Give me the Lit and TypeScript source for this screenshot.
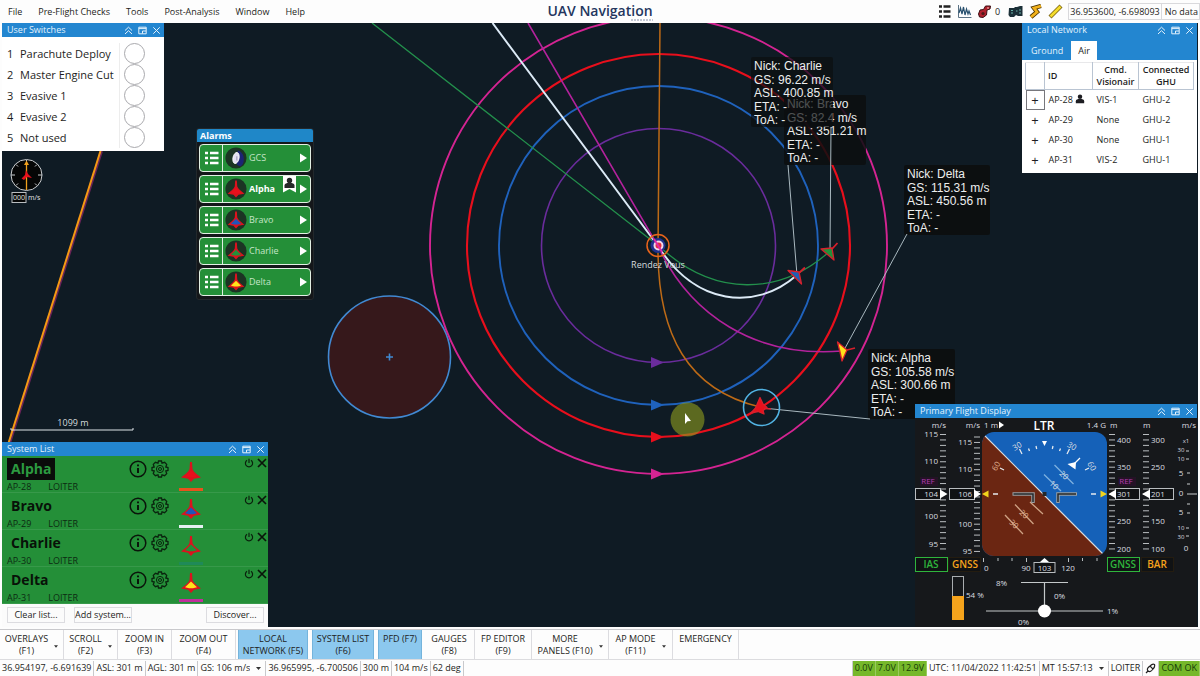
import { LitElement, html, svg, css } from "lit";
import { customElement, property, state } from "lit/decorators.js";
import { classMap } from "lit/directives/class-map.js";

type Craft = { name: string; id: string; fill: string; track: string };

const CRAFT: Craft[] = [
  { name: "Alpha", id: "AP-28", fill: "#e8101c", track: "#e8521c" },
  { name: "Bravo", id: "AP-29", fill: "#1f55b8", track: "#e6f0f4" },
  { name: "Charlie", id: "AP-30", fill: "#23913a", track: "#1f8a58" },
  { name: "Delta", id: "AP-31", fill: "#ffe31a", track: "#c0309c" },
];

const SWITCHES = ["Parachute Deploy", "Master Engine Cut", "Evasive 1", "Evasive 2", "Not used"];

const LINKS = [
  ["AP-28", "VIS-1", "GHU-2"],
  ["AP-29", "None", "GHU-2"],
  ["AP-30", "None", "GHU-1"],
  ["AP-31", "VIS-2", "GHU-1"],
];

const delta = (fill: string) => svg`
  <path d="M-1 -10 H1 L1.5 -3 C2.500 0 6 2.500 10 5.500 L3 6.800 L0 10 L-3 6.800 L-10 5.500 C-6 2.500 -2.500 0 -1.500 -3 Z" fill="#dc121e"/>
  <path d="M0 -1.500 L6 4.300 L2 5.300 H-2 L-6 4.300 Z" fill=${fill}/>`;

const person = svg`
  <circle cx="6" cy="3.4" r="2.7"/>
  <path d="M1 11 V8.6 C1 6.6 3 6 6 6 S11 6.6 11 8.6 V11 Z"/>`;

@customElement("tool-window")
class ToolWindow extends LitElement {
  @property() heading = "";

  static styles = css`
    :host { display: flex; flex-direction: column; background: #fff; }
    .bar {
      display: flex; align-items: center; gap: 5px; flex: none;
      height: 14px; padding: 0 3px 0 5px; background: #2386d0; color: #e4f2fc;
    }
    h2 { flex: 1; margin: 0; font: 9px/14px "Open Sans", "Noto Sans", sans-serif; white-space: nowrap; }
    button { all: unset; display: flex; cursor: pointer; }
    svg { width: 9px; height: 9px; fill: none; stroke: #e4f2fc; stroke-width: 1; }
  `;

  render() {
    return html`
      <div class="bar">
        <h2>${this.heading}</h2>
        <button aria-label="Collapse"><svg viewBox="0 0 9 9"><path d="M1 4.5 L4.5 1.2 L8 4.5 M1 8 L4.5 4.7 L8 8"/></svg></button>
        <button aria-label="Dock"><svg viewBox="0 0 9 9"><path d="M.8 1.2 H8.2 V7.8 H.8 Z M.8 2.6 H8.2 M8 5 H4.5 V7.5"/></svg></button>
        <button aria-label="Close"><svg viewBox="0 0 9 9"><path d="M1.3 1.3 L7.7 7.7 M7.7 1.3 L1.3 7.7"/></svg></button>
      </div>
      <slot></slot>
    `;
  }
}

@customElement("flight-map")
class FlightMap extends LitElement {
  static styles = css`
    :host { display: block; }
    svg { display: block; width: 100%; height: 100%; }
    .tag { font: 12px "Liberation Sans", Arial, sans-serif; fill: #eceeee; }
    .small { font: 9px "Open Sans", "Noto Sans", sans-serif; fill: #d4dadd; }
    .tiny { font: 7px "Open Sans", "Noto Sans", sans-serif; fill: #e4e4e4; }
  `;

  private tag(x: number, y: number, w: number, lines: string[], shade = 0.92) {
    return svg`
      <rect x=${x} y=${y} width=${w} height="70" rx="2" fill="#0c0e0f" fill-opacity=${shade}/>
      ${lines.map((t, i) => svg`<text class="tag" x=${x + 3} y=${y + 13 + i * 13.5}>${t}</text>`)}`;
  }

  private ring(r: number, color: string, w: number) {
    return svg`
      <circle cx="658.5" cy="245.5" r=${r} fill="none" stroke=${color} stroke-width=${w}/>
      <path d="M651 ${245.5 + r - 5.5} L664 ${245.5 + r} L651 ${245.5 + r + 5.5} Z" fill=${color}/>`;
  }

  render() {
    return html`
      <svg viewBox="2 23 1196 604" preserveAspectRatio="xMidYMid slice" role="img" aria-label="Mission map">
        <rect x="2" y="23" width="1196" height="604" fill="#0f1b24"/>
        <path d="M101.5 151 L9.5 443" stroke="#6a2458" stroke-width="3"/>
        <path d="M100.5 151 L8.5 443" stroke="#f59a12" stroke-width="2"/>
        <path d="M11 428 V430 H133 V428" fill="none" stroke="#dfe5e8" stroke-width="1"/>
        <text class="small" x="73" y="426" text-anchor="middle">1099 m</text>

        <circle cx="389.5" cy="357" r="61" fill="#36181b" stroke="#4189d2" stroke-width="1.6"/>
        <path d="M386 357 H393 M389.5 353.5 V360.5" stroke="#4189d2" stroke-width="1.6"/>

        ${this.ring(117, "#6a2c9c", 1.6)}
        ${this.ring(159.5, "#1f62bc", 1.9)}
        ${this.ring(191.5, "#e80f1c", 2.1)}
        ${this.ring(228.5, "#d42492", 1.9)}

        <g fill="none">
          <path d="M372 23 L660 247 C715 298 780 295 829 252" stroke="#23904c" stroke-width="1.3"/>
          <path d="M660 23 L658 250 C658 335 688 390 760 407" stroke="#bd6a16" stroke-width="1.5"/>
          <path d="M492.500 23 L658 246 C695 305 755 312 797 275" stroke="#dceaf6" stroke-width="2"/>
          <path d="M528 23 L658 246 C690 315 755 358 842 351" stroke="#b3229c" stroke-width="1.6"/>
        </g>

        <circle cx="658" cy="245.500" r="7.500" fill="#20308c"/>
        <circle cx="658" cy="245.500" r="11" fill="none" stroke="#e8641c" stroke-width="1.500"/>
        <circle cx="658.500" cy="245.500" r="4" fill="#e82c3c" stroke="#f2d8ea" stroke-width="2"/>
        <path d="M654 239 L662 252" stroke="#dd2ba6" stroke-width="2"/>
        <text class="small" x="658" y="268" text-anchor="middle">Rendez Vous</text>

        <circle cx="687.500" cy="419.500" r="17" fill="#8c9a1e" fill-opacity=".62"/>
        <path d="M685 413 L691 421 L687.500 421.300 L685 424 Z" fill="#fff"/>

        ${this.tag(784, 95, 82, ["Nick: Bravo", "GS: 82.4 m/s", "ASL: 351.21 m", "ETA: -", "ToA: -"], 0.85)}
        ${this.tag(751, 57, 82, ["Nick: Charlie", "GS: 96.22 m/s", "ASL: 400.85 m", "ETA: -", "ToA: -"], 0.7)}
        ${this.tag(904, 165, 86, ["Nick: Delta", "GS: 115.31 m/s", "ASL: 450.56 m", "ETA: -", "ToA: -"])}
        ${this.tag(868, 349, 87, ["Nick: Alpha", "GS: 105.58 m/s", "ASL: 300.66 m", "ETA: -", "ToA: -"])}

        <path d="M788 165 L797 275 M831 127 L830 250 M907 234 L844 350 M763 408 L870 419"
          fill="none" stroke="#a9b8bf" stroke-width="1"/>

        <g stroke-width="1.300" stroke="#d8202c" stroke-linejoin="round">
          <path d="M788 270.500 L799 272 L801.500 284 Z" fill="#1f5fb4"/>
          <path d="M799 273 L805 267.500" fill="none" stroke-width="1.800"/>
          <path d="M821 249 L832 248 L834 260 Z" fill="#23913a"/>
          <path d="M832 249 L837.500 243" fill="none" stroke-width="1.800"/>
          <path d="M837.500 342 L847 350 L842 361 L840 352 Z" fill="#ffe31a"/>
          <path d="M847 350 L855 348" fill="none" stroke-width="1.800"/>
          <path d="M751 413 L755.500 408 L760 397.500 L763 404 L767 407.500 L763 410.500 L764 414 L758 411.500 Z" fill="#e8101c"/>
          <path d="M764 408.500 L771 409" fill="none"/>
        </g>
        <circle cx="761.500" cy="407.500" r="18" fill="none" stroke="#52b4e4" stroke-width="1.600"/>

        <g>
          <circle cx="26.500" cy="175" r="15.500" fill="#050606" stroke="#c9cdd0" stroke-width="1"/>
          <path d="M26.500 160 V163 M26.500 187 V190 M11 175 H15 M38 175 H42 M16 164.500 L18 166.500 M37 164.500 L35 166.500 M16 185.500 L18 183.500 M37 185.500 L35 183.500"
            stroke="#c9cdd0" stroke-width="1"/>
          <path d="M26.500 163 V190" stroke="#f0a01c" stroke-width="1.300"/>
          <path d="M26.500 160.500 L29 165 H24 Z" fill="#f0a01c"/>
          <path d="M26 170 L28 174 L32 178 L27 177 L24 180 L21.500 178.500 L25 175 Z" fill="#e8101c"/>
          <rect x="12" y="192.500" width="14" height="10" fill="#050606" stroke="#b9bdc0" stroke-width="1"/>
          <text class="tiny" x="13" y="200">000</text>
          <text class="tiny" x="28" y="200">m/s</text>
        </g>
      </svg>
    `;
  }
}

@customElement("flight-display")
class FlightDisplay extends LitElement {
  static styles = css`
    :host { display: block; background: #16181b; }
    svg { display: block; width: 100%; }
    text { font: 8px "Open Sans", "Noto Sans", sans-serif; fill: #dcdee0; }
    .end { text-anchor: end; }
    .mid { text-anchor: middle; }
    .mode { font-size: 12px; font-weight: 600; fill: #fff; }
    .ref { font-size: 8px; fill: #b23cae; }
    .fine { font-size: 6px; text-anchor: middle; }
    .green { font-size: 10px; font-weight: 600; fill: #2fb53c; }
    .amber { font-size: 10px; font-weight: 600; fill: #f5a31c; }
    .warm { fill: #e0b090; }
  `;

  private ticks(x1: number, x2: number, from: number, step: number, count: number) {
    return Array.from({ length: count }, (_, i) => i).map(
      (i) => svg`<path d="M${x1} ${from + i * step} H${x2}" stroke="#b9bdc0" stroke-width="1"/>`
    );
  }

  private labels(x: number, cls: string, items: [string, number][]) {
    return items.map(([t, y]) => svg`<text class=${cls} x=${x} y=${y + 3}>${t}</text>`);
  }

  render() {
    return html`
      <svg viewBox="915 418 282 209" role="img" aria-label="Attitude, speed and altitude">
        <defs><clipPath id="face"><rect x="982" y="432" width="125" height="124" rx="12"/></clipPath></defs>
        <g clip-path="url(#face)">
          <rect x="982" y="432" width="125" height="124" fill="#1561b8"/>
          <path d="M982 433 L1107 558 H982 Z" fill="#6b2612"/>
          <path d="M982 433 L1107 558" stroke="#dcdee0" stroke-width="1.200"/>
        </g>
        <path d="M1042 441 H1047 L1044.500 446 Z M1067.500 464 L1076 462 L1075.500 469.500 Z" fill="#fff"/>
        <path d="M1074 464 L1080 458" stroke="#fff" stroke-width="1.300"/>
        <g stroke="#e6eaee" stroke-width="1.300">
          <path d="M1019.500 449 L1022 454 M1028.500 448.500 L1029.500 451 M1036 446 L1036.700 449 M1053 446 L1052.300 449 M1060.500 448.500 L1059.500 451 M1069.500 449 L1067 454 M1000 468 L1004 470 M1089 468 L1085 470"/>
          <path d="M1044 474.500 L1061 491 M1054.500 465 L1073.500 484" stroke="#7db0e0"/>
          <path d="M1005 515 L1023 534 M1015 504.500 L1033.500 524 M1030 502 L1043 514" stroke="#cfa284"/>
          <path d="M993 494 H998 M1091 494 H1096"/>
        </g>
        <text class="mid" transform="rotate(-30 1017 446)" x="1017" y="449">30</text>
        <text class="mid" transform="rotate(30 1072 446)" x="1072" y="449">30</text>
        <text class="mid warm" transform="rotate(-60 996 466)" x="996" y="469">60</text>
        <text class="mid" transform="rotate(60 1092 466)" x="1092" y="469">60</text>
        <text class="mid" transform="rotate(45 1054 485)" x="1054" y="488">10</text>
        <text class="mid" transform="rotate(45 1064 475)" x="1064" y="478">20</text>
        <text class="mid warm" transform="rotate(45 1024 514)" x="1024" y="517">20</text>
        <text class="mid warm" transform="rotate(45 1014 524)" x="1014" y="527">30</text>
        <g fill="none" stroke-width="3.500" stroke="#9aa0a4">
          <path d="M1012.500 494 H1033 V503 M1077 494 H1058 V503"/>
        </g>
        <g fill="none" stroke-width="1.500" stroke="#26282a">
          <path d="M1013.500 494 H1033 V502 M1076 494 H1058 V502"/>
        </g>
        <rect x="1042.500" y="492" width="4" height="4" fill="#26282a"/>
        <path d="M982 494 L988.500 490.500 V497.500 Z M1107 494 L1100.500 490.500 V497.500 Z" fill="#f2d41c"/>

        ${this.ticks(940, 946, 434.5, 5.45, 22)}
        ${this.ticks(974, 980, 437, 5.45, 22)}
        ${this.ticks(1109, 1115, 434.5, 5.45, 22)}
        ${this.ticks(1143, 1149, 434.5, 5.45, 22)}
        ${this.labels(938, "end", [["115", 434], ["110", 461], ["100", 516], ["95", 544]])}
        ${this.labels(972, "end", [["115", 442], ["110", 469], ["100", 524], ["95", 551]])}
        ${this.labels(1117, "", [["400", 440], ["350", 467], ["250", 521], ["200", 549]])}
        ${this.labels(1151, "", [["300", 440], ["250", 467], ["150", 521], ["100", 549]])}
        ${this.labels(1186, "fine", [["x1", 440]])}
        ${this.labels(1181, "fine", [["30", 449], ["10", 458], ["10", 527], ["30", 536]])}
        ${this.labels(1181, "mid", [["5", 473], ["0", 493], ["5", 512]])}
        ${this.labels(1186, "mid", [["0", 548]])}
        <path d="M1187 494 H1197 M1186 451 H1189 M1186 459 H1189 M1187 473 H1190 M1187 484 H1190 M1187 504 H1190 M1187 513 H1190 M1186 528 H1189 M1186 536 H1189" stroke="#c9cdd0" stroke-width="1"/>

        <g fill="#101214" stroke="#b9bdc0" stroke-width="1">
          <rect x="915.500" y="488.500" width="25" height="11"/>
          <rect x="949.500" y="488.500" width="25" height="11"/>
          <rect x="1115.500" y="488.500" width="24" height="11"/>
          <rect x="1149.500" y="488.500" width="24" height="11"/>
        </g>
        <path d="M940 489.500 L947.500 494 L940 498.500 Z M974 489.500 L981 494 L974 498.500 Z M1116 489.500 L1108.500 494 L1116 498.500 Z M1150 489.500 L1142 494 L1150 498.500 Z" fill="#fff"/>
        ${this.labels(938, "end", [["104", 494]])}
        ${this.labels(972, "end", [["106", 494]])}
        ${this.labels(1117, "", [["301", 494]])}
        ${this.labels(1151, "", [["201", 494]])}

        <rect x="920" y="477" width="18" height="9" fill="#241226"/>
        <rect x="1118" y="477" width="18" height="9" fill="#241226"/>
        <text class="ref mid" x="928" y="484">REF</text>
        <text class="ref mid" x="1126" y="484">REF</text>

        <text class="end" x="946" y="428">m/s</text>
        <text class="end" x="980" y="428">m/s</text>
        <text x="984" y="428">1 m</text>
        <path d="M999 421.500 L1004 425 L999 428.500 Z" fill="#fff"/>
        <text class="mode mid" x="1044" y="430">LTR</text>
        <text class="end" x="1106" y="428">1.4 G</text>
        <text x="1110" y="428">m</text>
        <text x="1143" y="428">m</text>
        <text class="end" x="1196" y="428">m/s</text>

        <g fill="#101214">
          <rect x="915.500" y="557.500" width="32" height="14" stroke="#2fb53c"/>
          <rect x="948.500" y="557.500" width="32" height="14" stroke="#241c10"/>
          <rect x="1107.500" y="557.500" width="32" height="14" stroke="#2fb53c"/>
          <rect x="1141.500" y="557.500" width="32" height="14" stroke="#241c10"/>
        </g>
        <text class="green mid" x="931" y="568">IAS</text>
        <text class="amber mid" x="965" y="568">GNSS</text>
        <text class="green mid" x="1123" y="568">GNSS</text>
        <text class="amber mid" x="1157" y="568">BAR</text>

        <path d="M983.500 558 V562 M998 558 V561 M1012 558 V561 M1026.500 558 V562 M1068.500 558 V562 M1082.500 558 V561 M1097 558 V561" stroke="#b9bdc0" stroke-width="1"/>
        <text x="984" y="571">0</text>
        <text class="mid" x="1026" y="571">90</text>
        <text class="mid" x="1068" y="571">120</text>
        <rect x="1034" y="562.500" width="21" height="10" fill="#101214" stroke="#b9bdc0"/>
        <text class="mid" x="1044.500" y="571">103</text>
        <path d="M1040 562 L1044.500 558 L1049 562 Z" fill="#fff"/>

        <rect x="952.500" y="576.500" width="11" height="43" fill="#16181b" stroke="#a9adb0"/>
        <rect x="952" y="596" width="12" height="24" fill="#f5a31c"/>
        <text x="966" y="598">54 %</text>
        <path d="M1021 582.500 H1068 M1044.500 582 V611 M986 611 H1103" stroke="#c4c8ca" stroke-width="1.200"/>
        <circle cx="1044.500" cy="611" r="6.500" fill="#fff"/>
        <text x="996" y="586">8%</text>
        <text x="1054" y="599">0%</text>
        <text x="1107" y="614">1%</text>
        <text x="1018" y="625">0%</text>
      </svg>
    `;
  }
}

@customElement("app-root")
class AppRoot extends LitElement {
  @state() private tab = "Air";

  static styles = css`
    :host {
      display: flex; flex-direction: column; min-height: 100vh; box-sizing: border-box;
      background: #fdfdfd; color: #1d1d22;
      font: 9px/12px "Open Sans", "Noto Sans", sans-serif;
    }
    * { box-sizing: border-box; }
    button, select, input { font: inherit; color: inherit; margin: 0; }
    button { background: none; border: 0; padding: 0; cursor: pointer; white-space: nowrap; }

    .top { display: grid; grid-template-columns: 1fr auto 1fr; align-items: center; height: 23px; }
    .menu { display: flex; gap: 16px; padding-left: 8px; }
    .logo { display: grid; justify-items: end; color: #24365e; font-weight: 600; font-size: 14px; line-height: 17px; white-space: nowrap; }
    .logo svg { width: 22px; height: 2px; }
    .tools { display: flex; align-items: center; justify-content: flex-end; gap: 5px; }
    .tools svg { width: 15px; height: 15px; display: block; }
    .counter { display: flex; align-items: center; gap: 3px; margin-right: 3px; }
    .field { border: 1px solid #d9d9dc; padding: 1px; line-height: 13px; white-space: nowrap; }
    .field + .field { border-left: 0; padding-left: 3px; }
    .fields { display: flex; }

    .stage { position: relative; flex: 1; min-height: 604px; margin: 0 2px; overflow: hidden; background: #0f1b24; }
    .map { position: absolute; inset: 0; }
    .win { position: absolute; }
    .w-switches { left: 0; top: 0; width: 162px; }
    .w-network { right: 1px; top: 0; width: 175px; }
    .w-systems { left: 0; bottom: 0; width: 266px; }
    .w-pfd { right: 1px; bottom: 0; width: 282px; }

    .switches { display: grid; grid-auto-rows: 21px; padding: 6px 0 3px; font-size: 11px; }
    .switches label { display: grid; grid-template-columns: 13px 99px 30px; padding-left: 5px; align-items: center; white-space: nowrap; }
    .knob { display: grid; place-items: center; height: 21px; border-left: 1px solid #ededed; }
    .knob input { appearance: none; width: 21px; height: 21px; border: 1px solid #a9a9ad; border-radius: 50%; background: #fff; }

    .alarms { position: absolute; left: 194px; top: 105px; width: 118px; background: #14171a; border: 1px solid #22282c; border-radius: 3px; overflow: hidden; }
    .alarms h2 { margin: 0; padding-left: 3px; background: #1f87c8; color: #fff; font: 700 9px/13px "Open Sans", "Noto Sans", sans-serif; }
    .alarms ul { list-style: none; margin: 0; padding: 2px 2px 3px; display: grid; gap: 3px; }
    .alarm { display: flex; align-items: stretch; width: 100%; height: 28px; border: 1px solid #e2efe4; border-radius: 4px; background: #248f38; color: #c4e6c8; overflow: hidden; }
    .alarm .bullets { width: 23px; border-right: 1px solid #e2efe4; display: grid; place-items: center; }
    .alarm .bullets svg { width: 15px; height: 16px; }
    .alarm .face { width: 22px; height: 22px; margin: 2px; }
    .alarm .label { flex: 1; text-align: left; align-self: center; }
    .alarm .arrow { width: 7px; height: 10px; align-self: center; margin-right: 3px; }
    .alarm .ribbon { width: 13px; height: 17px; margin-right: 4px; }
    .alarm.lead { color: #fff; font-weight: 700; }

    .tabs { display: flex; height: 23px; padding: 4px 5px 0; background: #2386d0; }
    .tabs button { height: 19px; padding: 0 7px; color: #e4f2fc; }
    .tabs button.on { margin-left: 4px; background: #fff; color: #1d1d22; }
    .tabs button:first-child { padding: 0 4px; }
    .net { padding: 2px 3px 3px; }
    .net table { width: 100%; border-collapse: collapse; table-layout: fixed; }
    .net th { height: 27px; padding: 0 3px; font-weight: 600; border: 1px solid #b9c4d2; border-top-color: #e8e8ea; line-height: 12px; }
    .net th.id { text-align: left; }
    .net td { height: 20px; padding: 0 4px; white-space: nowrap; }
    .net td:first-child { padding: 0; text-align: center; }
    .net .c1 { width: 19px; } .net .c2 { width: 48px; } .net .c3 { width: 46px; }
    .plus { width: 19px; height: 20px; border: 1px solid transparent; font-size: 13px; line-height: 18px; }
    .plus.on { border-color: #77777c; }
    .net svg { width: 10px; height: 10px; vertical-align: -1px; }

    .craft { display: grid; grid-template-columns: 122px 51px 22px 1fr auto; height: 37px; padding: 2px 1px 0 5px; background: #248f38; border-bottom: 1px solid #37994a; color: #0c2a12; }
    .craft .name { display: grid; justify-items: start; align-content: start; }
    .craft h3 { margin: 0; padding: 0 4px; color: #081208; font: 700 14px/22px "Open Sans", "Noto Sans", sans-serif; }
    .craft.lead h3 { background: #0a0c0a; color: #2c9a40; }
    .craft .meta { display: flex; gap: 17px; line-height: 13px; }
    .acts { display: flex; gap: 4px; align-items: flex-start; padding-top: 2px; }
    .acts svg { width: 18px; height: 18px; display: block; }
    .pic { width: 26px; height: 34px; margin-left: -2px; }
    .corner { display: flex; gap: 3px; align-items: flex-start; grid-column: 5; }
    .corner svg { width: 10px; height: 10px; display: block; }
    .foot { display: flex; gap: 9px; height: 23px; padding: 3px 4px 4px 5px; background: #fbfbfb; }
    .foot button { height: 16px; width: 58px; border: 1px solid #dcdce0; }
    .foot .push { margin-left: auto; }

    .keys { display: flex; height: 31px; margin-top: 2px; border-top: 1px solid #c9c9cc; border-bottom: 1px solid #dcdcdf; }
    .key { display: flex; align-items: flex-start; justify-content: center; gap: 6px; padding: 3px 2px 0; border-right: 1px solid #dcdce0; line-height: 12px; }
    .key svg { width: 4px; height: 3px; margin-top: 12px; }
    .key.on { background: #8cc8ee; border: 1px solid #74b4dc; border-width: 0 1px; margin: 0 2px; }
    .k44 { width: 44px; } .k51 { width: 51px; } .k54 { width: 54px; } .k57 { width: 57px; } .k62 { width: 62px; }
    .k64 { width: 64px; } .k66 { width: 66px; } .k70 { width: 70px; } .k77 { width: 77px; }

    .status { display: flex; align-items: center; height: 16px; white-space: nowrap; }
    .status > * { display: flex; align-items: center; height: 15px; padding: 0 2px; border-right: 1px solid #c9c9cc; }
    .status .gap { flex: 1; }
    .status .ok { background: #76b82a; border-right-color: #9acb60; color: #143a08; }
    .status .pick { gap: 6px; padding-right: 4px; }
    .pick select { appearance: none; border: 0; background: none; padding: 0; }
    .pick svg { width: 5px; height: 3px; }
    .status .plug { width: 11px; height: 11px; }
  `;

  private caret() {
    return html`<svg viewBox="0 0 5 3" aria-hidden="true"><path d="M0 0 H5 L2.5 3 Z" fill="#333"/></svg>`;
  }

  private menuBar() {
    return html`
      <header class="top">
        <nav class="menu">
          ${["File", "Pre-Flight Checks", "Tools", "Post-Analysis", "Window", "Help"].map((m) => html`<button>${m}</button>`)}
        </nav>
        <div class="logo">
          UAV Navigation
          <svg viewBox="0 0 22 2" aria-hidden="true"><path d="M0 1 H22" stroke="#8a94ac" stroke-dasharray="2 1"/></svg>
        </div>
        <div class="tools">
          <button aria-label="List"><svg viewBox="0 0 15 15"><path d="M2 2.500 H5 M2 7.500 H5 M2 12.500 H5 M6.500 2.500 H13.500 M6.500 7.500 H13.500 M6.500 12.500 H13.500" stroke="#222" stroke-width="2.400"/></svg></button>
          <button aria-label="Charts"><svg viewBox="0 0 15 15" fill="none"><path d="M1.500 1 V13.500 H14.500" stroke="#5b7284"/><path d="M2 9 L3.500 4 L5 10 L6.500 3 L8 11 L9.500 5 L11 10 L12 7 L13.500 11" stroke="#28506e" stroke-width="1.200"/></svg></button>
          <span class="counter">
            <button aria-label="Alerts"><svg viewBox="0 0 15 15"><path d="M1.500 10 L3 6 L6.500 5.500 L8.500 2 L13.500 2 L13 5 L10 6 L9.500 11 L6 13.500 L2.500 13 Z" fill="#b0202c" stroke="#3c1014"/><circle cx="6" cy="9.500" r="1.600" fill="#4c1a1a"/><circle cx="11" cy="4" r="1" fill="#e89090"/></svg></button>
            <span>0</span>
          </span>
          <button aria-label="GCS"><svg viewBox="0 0 15 15"><path d="M1 4 H6 L7 3 H9 L12 2 H14.500 V12 H10 L8 11 L6 13 H2 L.5 11 Z" fill="#1c3038"/><path d="M3 6.500 H5 M3 9 H5 M8 7 H9.500 M11 6 H13 M11 9 H13" stroke="#6ab0a8"/></svg></button>
          <button aria-label="Route"><svg viewBox="0 0 15 15"><path d="M13 2 L6 4 L9 8 L3 13" fill="none" stroke="#4c3404" stroke-width="4.400"/><path d="M13 2 L6 4 L9 8 L3 13" fill="none" stroke="#f2b21c" stroke-width="2.800"/></svg></button>
          <button aria-label="Ruler"><svg viewBox="0 0 15 15"><path d="M2 13 L13 2" stroke="#7c6410" stroke-width="4.200"/><path d="M2.500 12.500 L12.500 2.500" stroke="#f4dc2c" stroke-width="2.600"/></svg></button>
          <span class="fields"><span class="field">36.953600, -6.698093</span><span class="field">No data</span></span>
        </div>
      </header>
    `;
  }

  private alarmFace(c?: Craft) {
    return html`<svg class="face" viewBox="-13 -13 26 26" aria-hidden="true">
      <circle r="12.5" fill="#1c3424"/>
      ${c ? delta(c.fill)
          : svg`<path d="M2 -9 C10 -8 12 6 5 10 L1 8 Z" fill="#1c2474"/><ellipse rx="3.6" ry="6.600" transform="rotate(12)" fill="#e4e0f2" stroke="#fff"/><path d="M1 -2 V3" stroke="#8c88a8"/>`}
    </svg>`;
  }

  private alarm(label: string, c?: Craft) {
    const lead = label === "Alpha";
    return html`<li>
      <button class=${classMap({ alarm: true, lead })}>
        <span class="bullets"><svg viewBox="0 0 15 16" aria-hidden="true"><path d="M1 3 H4 M1 8 H4 M1 13 H4 M6 3 H14.500 M6 8 H14.500 M6 13 H14.500" stroke="#fff" stroke-width="2.600"/></svg></span>
        ${this.alarmFace(c)}
        <span class="label">${label}</span>
        ${lead ? html`<svg class="ribbon" viewBox="0 0 13 17" aria-hidden="true"><path d="M0 0 H13 V16.500 L6.500 13 L0 16.500 Z" fill="#fff"/><g fill="#26282a" transform="translate(.5 1)">${person}</g></svg>` : ""}
        <svg class="arrow" viewBox="0 0 7 10" aria-hidden="true"><path d="M0 .5 L7 5 L0 9.500 Z" fill="#fff"/></svg>
      </button>
    </li>`;
  }

  private system(c: Craft, i: number) {
    return html`
      <article class=${classMap({ craft: true, lead: i === 0 })}>
        <div class="name">
          <h3>${c.name}</h3>
          <div class="meta"><span>${c.id}</span><span>LOITER</span></div>
        </div>
        <div class="acts">
          <button aria-label="Info"><svg viewBox="0 0 18 18" fill="none" stroke="#0a140a"><circle cx="9" cy="9" r="7.800" stroke-width="1.500"/><path d="M9 8 V13 M9 4.500 V6.300" stroke-width="2"/></svg></button>
          <button aria-label="Settings"><svg viewBox="0 0 18 18" fill="none" stroke="#0a240e"><path d="M7.500 1 H10.500 L11 3.200 L13.600 2.300 L15.700 4.400 L14.800 7 L17 7.500 V10.500 L14.800 11 L15.700 13.600 L13.600 15.700 L11 14.800 L10.500 17 H7.500 L7 14.800 L4.400 15.700 L2.300 13.600 L3.200 11 L1 10.500 V7.500 L3.200 7 L2.300 4.400 L4.400 2.300 L7 3.200 Z" stroke-width="1.300"/><circle cx="9" cy="9" r="3.600"/><circle cx="9" cy="9" r="1.500"/></svg></button>
        </div>
        <svg class="pic" viewBox="-13 -14 26 34" aria-hidden="true">
          ${delta(c.fill)}
          <path d="M-12 17.500 H12" stroke=${c.track} stroke-width="3"/>
        </svg>
        <div class="corner">
          <button aria-label="Power"><svg viewBox="0 0 10 10" fill="none" stroke="#0a200c" stroke-width="1.200"><path d="M3 2.300 A3.600 3.600 0 1 0 7 2.300 M5 .8 V5"/></svg></button>
          <button aria-label="Remove"><svg viewBox="0 0 10 10"><path d="M1 1 L9 9 M9 1 L1 9" stroke="#0a140a" stroke-width="1.700"/></svg></button>
        </div>
      </article>
    `;
  }

  private key(size: string, a: string, b: string, on = false, more = false) {
    return html`<button class="key ${size} ${on ? "on" : ""}">
      <span>${a}${b ? html`<br />${b}` : ""}</span>${more ? this.caret() : ""}
    </button>`;
  }

  render() {
    return html`
      ${this.menuBar()}
      <main class="stage">
        <flight-map class="map"></flight-map>

        <tool-window class="win w-switches" heading="User Switches">
          <div class="switches">
            ${SWITCHES.map((s, i) => html`<label><span>${i + 1}</span><span>${s}</span><span class="knob"><input type="checkbox" /></span></label>`)}
          </div>
        </tool-window>

        <section class="alarms">
          <h2>Alarms</h2>
          <ul>${this.alarm("GCS")}${CRAFT.map((c) => this.alarm(c.name, c))}</ul>
        </section>

        <tool-window class="win w-network" heading="Local Network">
          <div class="tabs">
            ${["Ground", "Air"].map((t) => html`<button class=${classMap({ on: this.tab === t })} @click=${() => (this.tab = t)}>${t}</button>`)}
          </div>
          <div class="net">
            <table>
              <colgroup><col class="c1" /><col class="c2" /><col class="c3" /><col /></colgroup>
              <thead><tr><th></th><th class="id">ID</th><th>Cmd.<br />Visionair</th><th>Connected<br />GHU</th></tr></thead>
              <tbody>
                ${LINKS.map(([id, vis, ghu], i) => html`<tr>
                  <td><button class="plus ${i === 0 ? "on" : ""}" aria-label="Expand ${id}">+</button></td>
                  <td>${id}${i === 0 ? html` <svg viewBox="0 0 12 12" fill="#1d1d22" aria-hidden="true">${person}</svg>` : ""}</td>
                  <td>${vis}</td><td>${ghu}</td>
                </tr>`)}
              </tbody>
            </table>
          </div>
        </tool-window>

        <tool-window class="win w-systems" heading="System List">
          ${CRAFT.map((c, i) => this.system(c, i))}
          <div class="foot">
            <button>Clear list...</button><button>Add system...</button><button class="push">Discover...</button>
          </div>
        </tool-window>

        <tool-window class="win w-pfd" heading="Primary Flight Display">
          <flight-display></flight-display>
        </tool-window>
      </main>

      <div class="keys">
        ${this.key("k64", "OVERLAYS", "(F1)", false, true)}
        ${this.key("k54", "SCROLL", "(F2)", false, true)}
        ${this.key("k54", "ZOOM IN", "(F3)")}
        ${this.key("k64", "ZOOM OUT", "(F4)")}
        ${this.key("k70", "LOCAL", "NETWORK (F5)", true)}
        ${this.key("k62", "SYSTEM LIST", "(F6)", true)}
        ${this.key("k44", "PFD (F7)", "", true)}
        ${this.key("k51", "GAUGES", "(F8)")}
        ${this.key("k57", "FP EDITOR", "(F9)")}
        ${this.key("k77", "MORE", "PANELS (F10)", false, true)}
        ${this.key("k64", "AP MODE", "(F11)", false, true)}
        ${this.key("k66", "EMERGENCY", "")}
      </div>

      <footer class="status">
        <span>36.954197, -6.691639</span><span>ASL: 301 m</span><span>AGL: 301 m</span>
        <span class="pick"><select aria-label="Ground speed"><option>GS: 106 m/s</option></select>${this.caret()}</span>
        <span>36.965995, -6.700506</span><span>300 m</span><span>104 m/s</span><span>62 deg</span>
        <span class="gap"></span>
        <span class="ok">0.0V</span><span class="ok">7.0V</span><span class="ok">12.9V</span>
        <span>UTC: 11/04/2022 11:42:51</span>
        <span class="pick"><select aria-label="Mission time"><option>MT 15:57:13</option></select>${this.caret()}</span>
        <span>LOITER</span>
        <span><svg class="plug" viewBox="0 0 11 11" fill="none" stroke="#222" stroke-width="1.200" aria-hidden="true"><path d="M1 10 L3 8 M3 8 C1.500 6 3 4.500 5 3 L8 6 C6.500 8 5 9.500 3 8 M5 3 C6.500 1.500 8.500 1 9.500 1.500 C10 3 9.500 4.500 8 6"/></svg></span>
        <span class="ok">COM OK</span>
      </footer>
    `;
  }
}
